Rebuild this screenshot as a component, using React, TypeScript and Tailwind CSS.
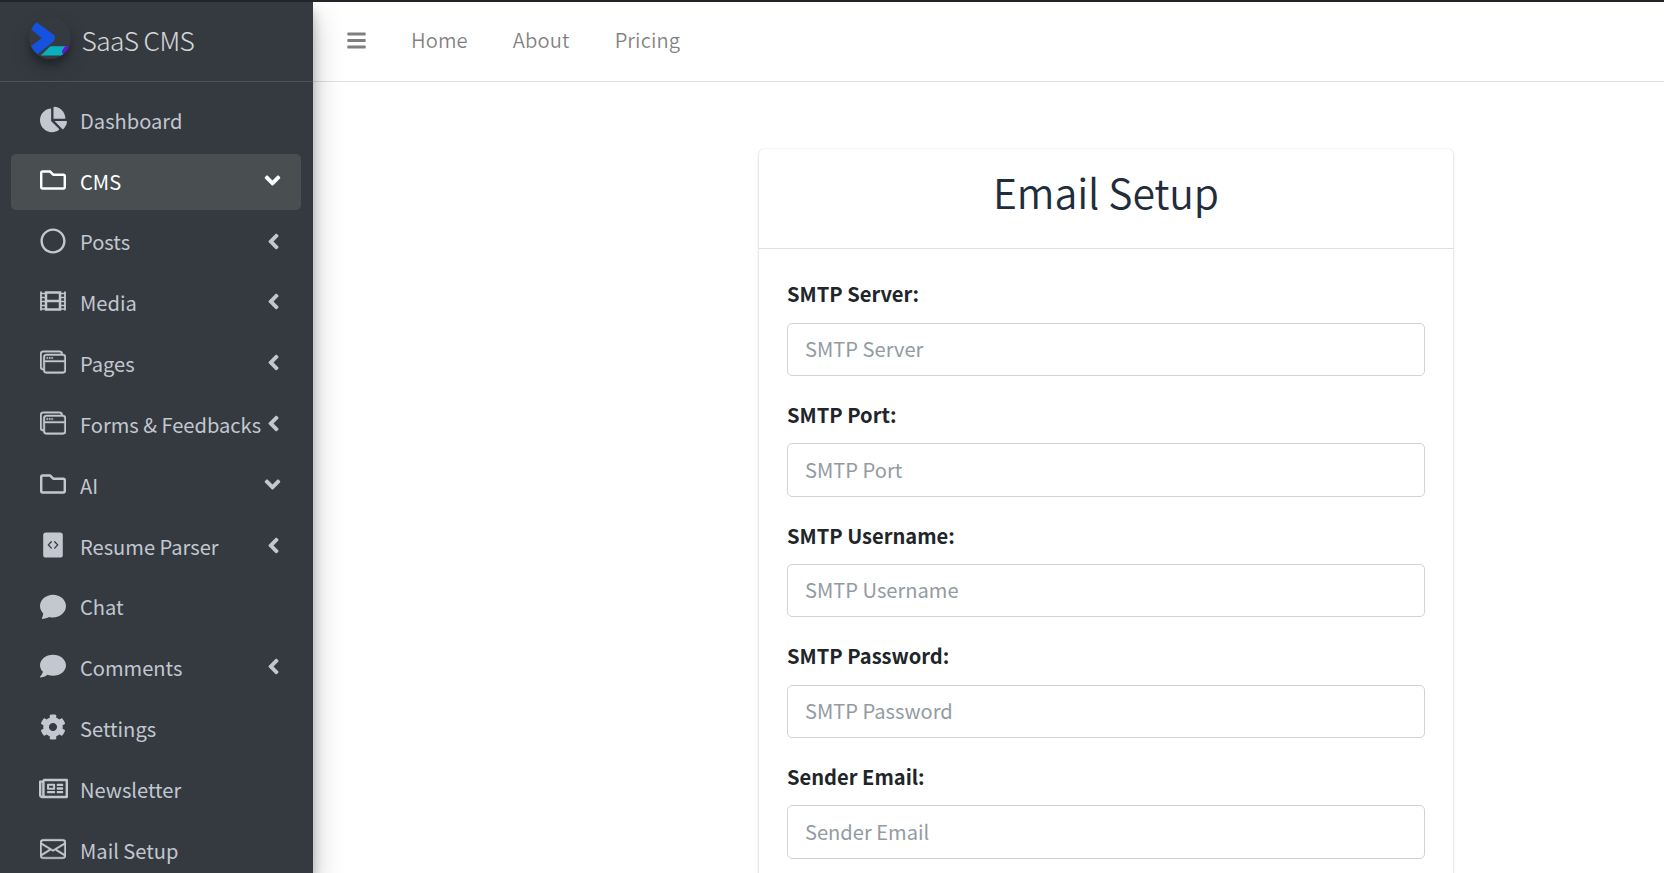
import { BsWindowStack, BsChatFill, BsEnvelope } from "react-icons/bs";
import { FaRegFolder, FaRegCircle, FaChartPie, FaComment, FaCog, FaRegNewspaper, FaBars, FaAngleLeft, FaAngleDown } from "react-icons/fa";
import type { ComponentType } from "react";

type IconProps = { size?: number; className?: string };
type Item = { label: string; icon: ComponentType<IconProps>; size: number; arrow?: "left" | "down"; active?: boolean; iconClass?: string };

function FilmIcon({ size = 26 }: IconProps) {
  return (
    <svg width={size} height={size} viewBox="0 0 26 26" fill="none" stroke="currentColor">
      <path d="M1 3.500V22.500M25 3.500V22.500" strokeWidth="1.800" />
      <path d="M6 4.500H20V21.500H6ZM6 13H20" strokeWidth="2.500" />
      <path d="M1 5.500H6M1 9.500H6M1 13.500H6M1 17.500H6M1 21H6M20 5.500H25M20 9.500H25M20 13.500H25M20 17.500H25M20 21H25" strokeWidth="1.700" />
    </svg>
  );
}

function FileCodeIcon({ size = 26 }: IconProps) {
  return (
    <svg width={size} height={size} viewBox="0 0 26 26" fill="none">
      <rect x="3.200" y="0.500" width="19.600" height="25" rx="2.600" fill="currentColor" />
      <path d="M11.300 9.700 8.300 12.900 11.300 16.100M14.700 9.700 17.700 12.900 14.700 16.100" stroke="#343a40" strokeWidth="1.300" strokeLinecap="round" strokeLinejoin="round" />
    </svg>
  );
}

const bold = "stroke-current stroke-[0.25]";

const items: Item[] = [
  { label: "Dashboard", icon: FaChartPie, size: 27 },
  { label: "CMS", icon: FaRegFolder, size: 26, arrow: "down", active: true },
  { label: "Posts", icon: FaRegCircle, size: 26, arrow: "left" },
  { label: "Media", icon: FilmIcon, size: 26, arrow: "left" },
  { label: "Pages", icon: BsWindowStack, size: 26, arrow: "left", iconClass: bold },
  { label: "Forms & Feedbacks", icon: BsWindowStack, size: 26, arrow: "left", iconClass: bold },
  { label: "AI", icon: FaRegFolder, size: 26, arrow: "down" },
  { label: "Resume Parser", icon: FileCodeIcon, size: 26, arrow: "left" },
  { label: "Chat", icon: BsChatFill, size: 26 },
  { label: "Comments", icon: FaComment, size: 26, arrow: "left" },
  { label: "Settings", icon: FaCog, size: 26 },
  { label: "Newsletter", icon: FaRegNewspaper, size: 29 },
  { label: "Mail Setup", icon: BsEnvelope, size: 26, iconClass: bold },
];

const fields = ["SMTP Server", "SMTP Port", "SMTP Username", "SMTP Password", "Sender Email"];

function Logo() {
  return (
    <svg viewBox="0 0 42 42" className="mb-2 size-[42px] rounded-full shadow-[0_10px_20px_rgba(0,0,0,.19),0_6px_6px_rgba(0,0,0,.23)]">
      <path d="M2 12 Q4 8 7.500 5.200 L24.500 17.500 Q27.500 21 24.500 24.500 L8.500 37.300 Q4.500 34 2 29 L12.700 21.200 Z" fill="#1552e0" />
      <path d="M22 29.300 H37 L35 38.500 H11.700 L20 30.500 Q21 29.300 22 29.300 Z" fill="#0baebd" />
      <path d="M36.500 29.300 H40.200 Q38.500 34.500 34.500 38.500 Q31 33.500 36.500 29.300Z" fill="#6610d8" />
    </svg>
  );
}

function NavItem({ item }: { item: Item }) {
  const Icon = item.icon;
  return (
    <a className={`mb-[4.84px] flex h-14 shrink-0 items-center rounded-[5px] pl-[26px] pr-4 ${item.active ? "bg-[#494e51] text-white" : "text-[#c2c7d0]"}`}>
      <span className="flex w-8 shrink-0 justify-center pb-1"><Icon size={item.size} className={item.iconClass} /></span>
      <span className="ml-[11px] min-w-0 flex-1 whitespace-nowrap pb-[0.6px] text-[20.1px] leading-8">{item.label}</span>
      {item.arrow === "left" && <FaAngleLeft size={25} className="-mr-px mb-[3px] shrink-0" />}
      {item.arrow === "down" && <FaAngleDown size={25} className="mb-[3px] shrink-0" />}
    </a>
  );
}

export default function App() {
  return (
    <div className="flex h-[873px] overflow-hidden border-t-2 border-[#212529] bg-white font-['Noto_Sans_CJK_SC',sans-serif]">
      <aside className="z-10 flex w-[313px] shrink-0 flex-col overflow-hidden bg-[#343a40] shadow-[0_14px_28px_rgba(0,0,0,.25),0_10px_10px_rgba(0,0,0,.22)]">
        <div className="flex h-20 shrink-0 items-center border-b border-[#4b545c] pl-[29px]">
          <Logo />
          <span className="ml-[10.500px] pb-[3px] text-[26.3px] font-light tracking-[-0.6px] text-white/80">SaaS CMS</span>
        </div>
        <nav className="flex flex-col pt-[11px] pl-[11px] pr-3">
          {items.map((item) => <NavItem key={item.label} item={item} />)}
        </nav>
      </aside>
      <main className="flex-1">
        <header className="flex h-20 items-center border-b border-[#dee2e6] pb-[2px] pl-[33px] text-[20.2px] font-[350] tracking-[0.1px] text-black/50">
          <FaBars size={21} />
          <span className="ml-[44px]">Home</span>
          <span className="ml-[45px]">About</span>
          <span className="ml-[45px]">Pricing</span>
        </header>
        <section className="ml-[446px] mt-[67px] h-[900px] w-[694px] rounded-[5px] bg-white shadow-[0_0_1px_rgba(0,0,0,.125),0_1px_3px_rgba(0,0,0,.2)]">
          <div className="flex h-[100px] items-center justify-center border-b border-[#dfdfdf] pb-[13px]">
            <h1 className="text-[41px] font-[350] tracking-[-0.15px] text-[#1f2d3d]">Email Setup</h1>
          </div>
          <form className="px-7 pt-[27.3px]">
            {fields.map((f) => (
              <div key={f} className="mb-[21px]">
                <label className="mb-[10.4px] block text-[20.1px] leading-9 font-bold text-[#212529]">{f}:</label>
                <input placeholder={f} className="block h-[53.3px] w-full rounded-[5px] border border-[#ced4da] px-[17px] pb-[2px] text-[20.1px] placeholder:text-[#939ba2]" />
              </div>
            ))}
          </form>
        </section>
      </main>
    </div>
  );
}
